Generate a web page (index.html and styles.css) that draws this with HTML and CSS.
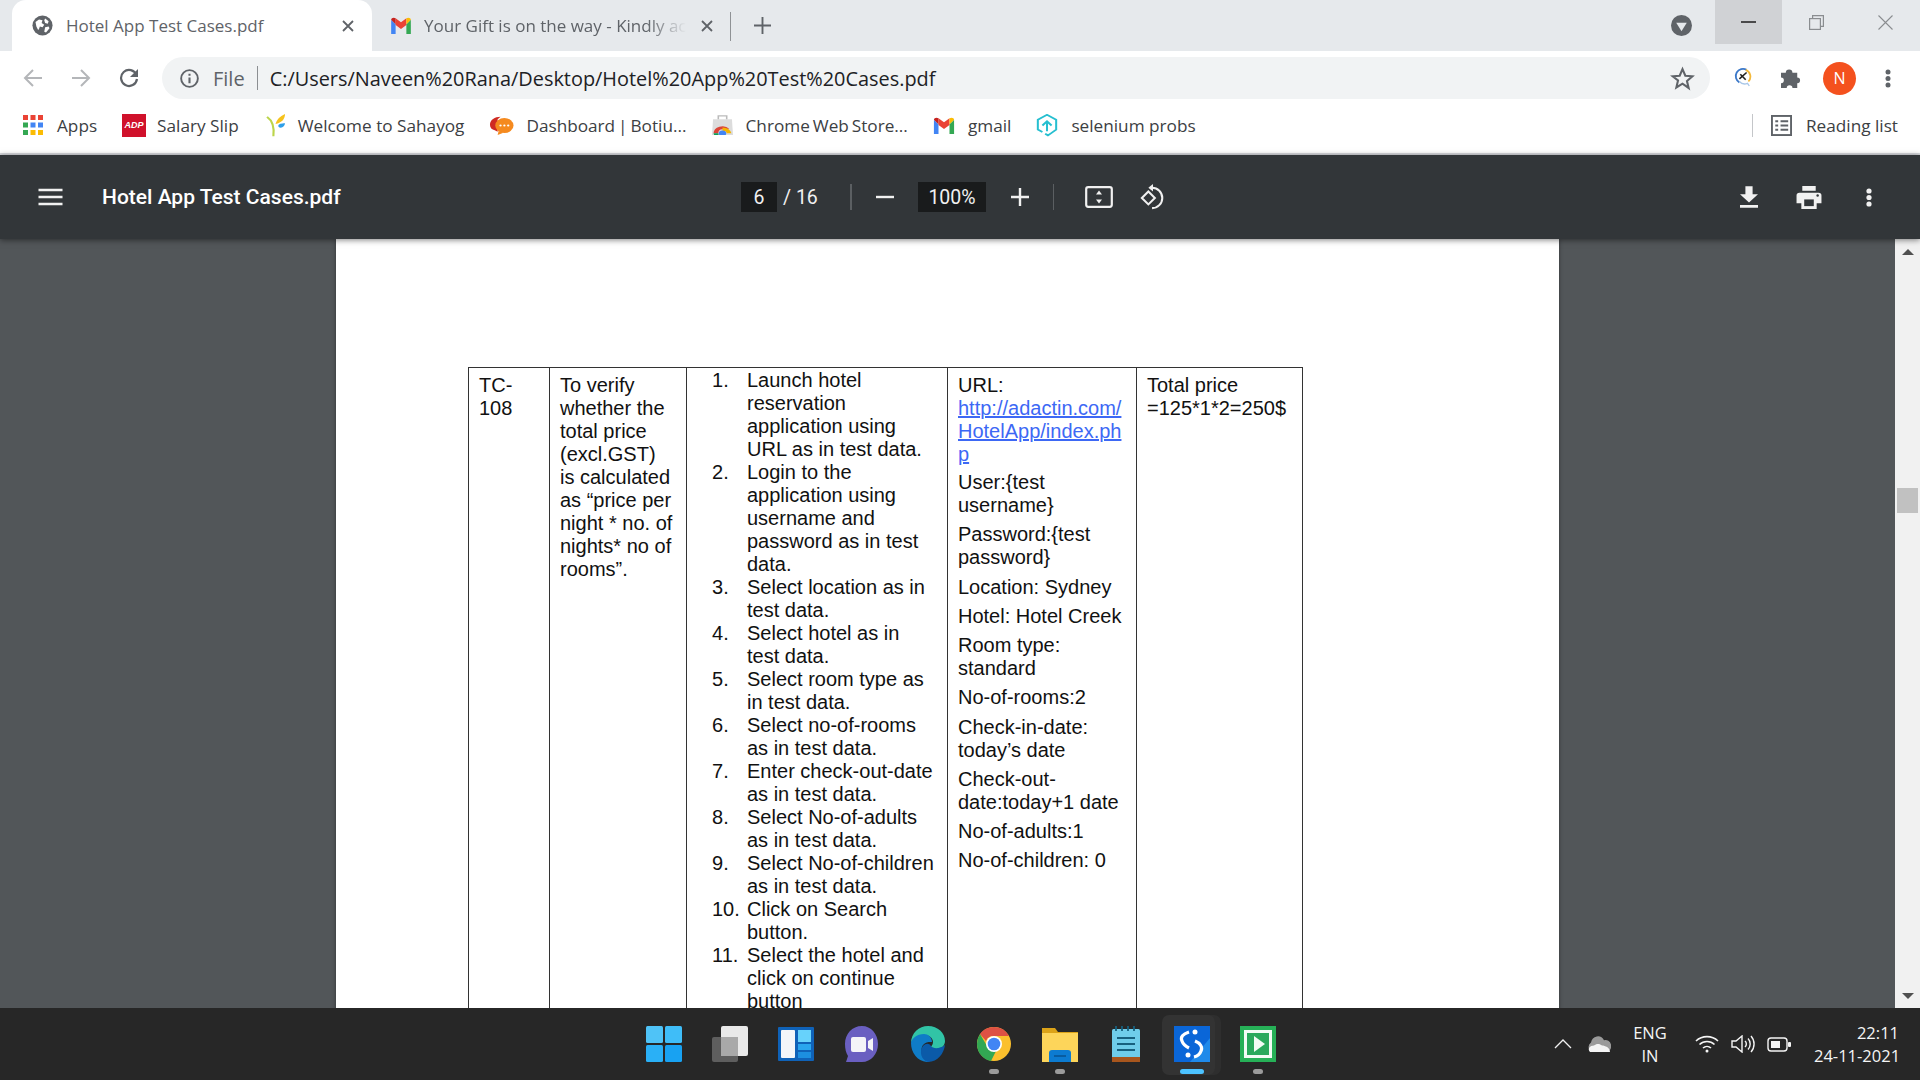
FILE: index.html
```html
<!DOCTYPE html>
<html lang="en">
<head>
    <meta charset="UTF-8">
    <title>Hotel App Test Cases.pdf</title>
    <link rel="stylesheet" href="styles.css">
</head>
<body>
    <div class="tabstrip">
        <div class="tab active">
            <svg class="favicon" viewBox="0 0 24 24"><circle cx="12" cy="12" r="11.5" fill="#5f6368"/><path d="M4 8l4-3 4 1-1 3 3 2-2 3-3-1-1 3-1 1-2-4zM15 4l4 3-1 3-3-1-1-3zM15 14l4-1 1 2-4 5-2-1z" fill="#fff"/></svg>
            <span class="tab-title">Hotel App Test Cases.pdf</span>
            <svg class="tab-x" viewBox="0 0 12 12"><path d="M1 1l10 10M11 1L1 11" stroke="#5f6368" stroke-width="1.8"/></svg>
        </div>
        <div class="tab inactive">
            <svg class="favicon mail" viewBox="0 0 24 19"><path d="M1 3v16h5V8z" fill="#4285f4"/><path d="M23 3v16h-5V8z" fill="#34a853"/><path d="M6 1.500V9l6 4.500L18 9V1.500l-6 4.500z" fill="#ea4335"/><path d="M1 3c0-2 3-3 5-1.500V8z" fill="#c5221f"/><path d="M23 3c0-2-3-3-5-1.500V8z" fill="#fbbc04"/></svg>
            <span class="tab-title fade">Your Gift is on the way - Kindly ack</span>
            <svg class="tab-x" viewBox="0 0 12 12"><path d="M1 1l10 10M11 1L1 11" stroke="#5f6368" stroke-width="1.8"/></svg>
        </div>
        <div class="tab-sep"></div>
        <svg class="new-tab" viewBox="0 0 18 18"><path d="M9 0v18M0 9h18" stroke="#5f6368" stroke-width="2"/></svg>
        <div class="strip-space"></div>
        <svg class="tab-search" viewBox="0 0 22 22"><circle cx="11" cy="11" r="11" fill="#5f6368"/><path d="M5.500 8h11L11 17z" fill="#e6e9ec"/></svg>
        <div class="win-btn hover"><svg width="15" height="2" viewBox="0 0 15 2"><path d="M0 1h15" stroke="#111" stroke-width="1.400"/></svg></div>
        <div class="win-btn"><svg width="15" height="15" viewBox="0 0 15 15" fill="none" stroke="#8a8d90" stroke-width="1.200"><rect x="0.600" y="3.600" width="10.800" height="10.800"/><path d="M3.600 3.600V0.600h10.800v10.800h-3"/></svg></div>
        <div class="win-btn"><svg width="15" height="15" viewBox="0 0 15 15"><path d="M0.500 0.500l14 14M14.500 0.500l-14 14" stroke="#8a8d90" stroke-width="1.100"/></svg></div>
    </div>

    <div class="toolbar">
        <svg class="nav-icon" viewBox="0 0 20 20"><path d="M19 10H2M10 2l-8 8 8 8" fill="none" stroke="#b4b6b9" stroke-width="2"/></svg>
        <svg class="nav-icon" viewBox="0 0 20 20"><path d="M1 10h17M10 2l8 8-8 8" fill="none" stroke="#b4b6b9" stroke-width="2"/></svg>
        <svg class="nav-icon" viewBox="0 0 20 20"><path d="M17.500 7A8 8 0 1 0 18 11" fill="none" stroke="#5f6368" stroke-width="2.200"/><path d="M19 1v8h-8z" fill="#5f6368"/></svg>
        <div class="omnibox">
            <svg class="info" viewBox="0 0 20 20"><circle cx="10" cy="10" r="8.800" fill="none" stroke="#5f6368" stroke-width="2"/><path d="M10 9v6M10 5v2.200" stroke="#5f6368" stroke-width="2.200"/></svg>
            <span class="file-label">File</span>
            <span class="omni-sep"></span>
            <span class="url">C:/Users/Naveen%20Rana/Desktop/Hotel%20App%20Test%20Cases.pdf</span>
            <svg class="star" viewBox="0 0 24 24"><path d="M12 3l2.700 6.300 6.800.6-5.200 4.500 1.600 6.700L12 17l-5.900 3.600 1.600-6.700L2.500 9.900l6.800-.6z" fill="none" stroke="#5f6368" stroke-width="2"/></svg>
        </div>
        <svg class="ext" viewBox="0 0 20 22"><path d="M14 3A8 8 0 0 0 6 17" fill="none" stroke="#3b78c9" stroke-width="2"/><path d="M13 3a8 8 0 0 1 3 13" fill="none" stroke="#f4b93c" stroke-width="2"/><path d="M6 16a8 8 0 0 0 9 2l2 3" fill="none" stroke="#a9c7e8" stroke-width="1.500"/><path d="M6 13l8-7M7 8l6 6" stroke="#222" stroke-width="1.800"/></svg>
        <svg class="puzzle" viewBox="0 0 22 22"><path d="M0 6h5a3.500 3.500 0 0 1 7 0h5v5a3 3 0 0 1 0 6v5h-5a3 3 0 0 0-6 0H0v-5a3 3 0 0 0 0-6z" fill="#5f6368"/></svg>
        <div class="avatar">N</div>
        <svg class="dots" viewBox="0 0 6 19"><circle cx="3" cy="3" r="2.500" fill="#5f6368"/><circle cx="3" cy="9.500" r="2.500" fill="#5f6368"/><circle cx="3" cy="16" r="2.500" fill="#5f6368"/></svg>
    </div>

    <div class="bookmarks">
        <div class="bm">
            <svg class="bm-icon apps" viewBox="0 0 20 20"><g fill="#ea4335"><rect x="0" y="0" width="5" height="5"/><rect x="7.500" y="0" width="5" height="5"/><rect x="15" y="0" width="5" height="5"/></g><rect x="0" y="7.500" width="5" height="5" fill="#34a853"/><rect x="7.500" y="7.500" width="5" height="5" fill="#4285f4"/><rect x="15" y="7.500" width="5" height="5" fill="#4285f4"/><rect x="0" y="15" width="5" height="5" fill="#34a853"/><rect x="7.500" y="15" width="5" height="5" fill="#fbbc04"/><rect x="15" y="15" width="5" height="5" fill="#fbbc04"/></svg>
            <span>Apps</span>
        </div>
        <div class="bm">
            <div class="adp">ADP</div>
            <span>Salary Slip</span>
        </div>
        <div class="bm">
            <svg class="bm-icon sahayog" viewBox="0 0 18 32" preserveAspectRatio="none"><path d="M1 4c5 5 7 14 6 27" fill="none" stroke="#bcd54a" stroke-width="2"/><path d="M9 14C10 8 13 3 18 0c0 7-3 12-9 14z" fill="#f6c21c"/><path d="M12 15c2-2 5-2 6-2 0 3-2 6-4 6s-3-2-2-4z" fill="#2f9fe8"/></svg>
            <span>Welcome to Sahayog</span>
        </div>
        <div class="bm">
            <svg class="bm-icon botium" viewBox="0 0 26 24" preserveAspectRatio="none"><path d="M12 1C6 1 1 5 1 11c0 4 2 6 5 7l3 2V4z" fill="#cf2a22"/><circle cx="16" cy="12" r="9.500" fill="#f58a1f"/><path d="M10 19l-1 5 6-3z" fill="#f58a1f"/><g fill="#fff"><circle cx="12" cy="12" r="1.200"/><circle cx="16" cy="12" r="1.200"/><circle cx="20" cy="12" r="1.200"/></g></svg>
            <span class="tight">Dashboard | Botiu...</span>
        </div>
        <div class="bm">
            <svg class="bm-icon store" viewBox="0 0 20 24" preserveAspectRatio="none"><path d="M1 5h18l1 19H0z" fill="#dcdcdc"/><path d="M6 5V1h8v4" fill="none" stroke="#bbb" stroke-width="1.500"/><path d="M1.500 22a8.500 8.500 0 0 1 15-5.500L10 17c-3 0-4 2-4 5z" fill="#db4437"/><path d="M10 15a8.500 8.500 0 0 1 8.500 7H14c0-2-2-3-4-3z" fill="#f4b400"/><path d="M1.500 22H6c0 1 .3 2 .6 2H2z" fill="#0f9d58"/><circle cx="10" cy="22" r="3.500" fill="#4285f4"/></svg>
            <span class="tight">Chrome Web Store...</span>
        </div>
        <div class="bm">
            <svg class="bm-icon gmail" viewBox="0 0 24 19" preserveAspectRatio="none"><path d="M1 3v16h5V8z" fill="#4285f4"/><path d="M23 3v16h-5V8z" fill="#34a853"/><path d="M6 1.500V9l6 4.500L18 9V1.500l-6 4.500z" fill="#ea4335"/><path d="M1 3c0-2 3-3 5-1.500V8z" fill="#c5221f"/><path d="M23 3c0-2-3-3-5-1.500V8z" fill="#fbbc04"/></svg>
            <span>gmail</span>
        </div>
        <div class="bm">
            <svg class="bm-icon selenium" viewBox="0 0 24 28" preserveAspectRatio="none" fill="none" stroke="#26bfd0" stroke-width="2.200"><path d="M7 22l-5-3V7l10-6 10 6v12l-5 4-4 3-3-2"/><path d="M12 21V10M7 14l5-5 5 5"/></svg>
            <span>selenium probs</span>
        </div>
        <div class="bm-space"></div>
        <div class="bm-sep"></div>
        <div class="bm reading">
            <svg class="bm-icon list" viewBox="0 0 22 22" fill="none" stroke="#5f6368" stroke-width="2"><rect x="1" y="1" width="20" height="20"/><path d="M4.500 6.500h3M10 6.500h8M4.500 11h3M10 11h8M4.500 15.500h3M10 15.500h8"/></svg>
            <span>Reading list</span>
        </div>
    </div>

    <div class="pdf-toolbar">
        <div class="pdf-left">
            <svg class="menu" viewBox="0 0 24 18"><path d="M0 2h24M0 9h24M0 16h24" stroke="#f1f1f1" stroke-width="2.600"/></svg>
            <span class="pdf-title">Hotel App Test Cases.pdf</span>
        </div>
        <div class="pdf-center">
            <div class="num-box page-box">6</div>
            <span class="page-total">/&nbsp;16</span>
            <div class="pdf-sep"></div>
            <svg class="zoom-btn" viewBox="0 0 18 18"><path d="M0 9h18" stroke="#f1f1f1" stroke-width="2.400"/></svg>
            <div class="num-box zoom-box">100%</div>
            <svg class="zoom-btn" viewBox="0 0 18 18"><path d="M0 9h18M9 0v18" stroke="#f1f1f1" stroke-width="2.400"/></svg>
            <div class="pdf-sep second"></div>
            <svg class="fit" viewBox="0 0 28 22"><rect x="1.200" y="1.200" width="25.600" height="19.600" rx="2" fill="none" stroke="#f1f1f1" stroke-width="2.200"/><path d="M14 4.500l3 4h-6zM14 17.500l3-4h-6z" fill="#f1f1f1"/></svg>
            <svg class="rotate" viewBox="0 0 28 28" fill="none" stroke="#f1f1f1" stroke-width="2.200"><path d="M2 15l7-7 7 7-7 7z"/><path d="M13 4a11 11 0 1 1 0 22"/><path d="M14 0v8l-5-4z" fill="#f1f1f1" stroke="none"/></svg>
        </div>
        <div class="pdf-right">
            <svg class="dl" viewBox="0 0 20 24"><path d="M6 0h8v9h6L10 18 0 9h6zM0 21h20v3H0z" fill="#f1f1f1"/></svg>
            <svg class="print" viewBox="0 0 26 24"><path d="M6 0h14v5H6z" fill="#f1f1f1"/><path d="M3 7h20a3 3 0 0 1 3 3v8h-5v6H5v-6H0v-8a3 3 0 0 1 3-3z" fill="#f1f1f1"/><path d="M8 14h10v7H8z" fill="#323639"/><circle cx="22" cy="10" r="1.300" fill="#323639"/></svg>
            <svg class="pdf-dots" viewBox="0 0 6 19"><circle cx="3" cy="3" r="2.600" fill="#f1f1f1"/><circle cx="3" cy="9.500" r="2.600" fill="#f1f1f1"/><circle cx="3" cy="16" r="2.600" fill="#f1f1f1"/></svg>
        </div>
    </div>

    <div class="viewer">
        <div class="pages">
            <div class="page">
                <table class="cases">
                    <colgroup>
                        <col class="c1"><col class="c2"><col class="c3"><col class="c4"><col class="c5">
                    </colgroup>
                    <tr>
                        <td class="pad">TC-<br>108</td>
                        <td class="pad verify">To verify whether the total price (excl.GST) is calculated as “price per night * no. of nights* no of rooms”.</td>
                        <td class="steps-cell">
                            <ol class="steps">
                                <li>Launch hotel reservation application using URL as in test data.</li>
                                <li>Login to the application using username and password as in test data.</li>
                                <li>Select location as in test data.</li>
                                <li>Select hotel as in test data.</li>
                                <li>Select room type as in test data.</li>
                                <li>Select no-of-rooms as in test data.</li>
                                <li>Enter check-out-date as in test data.</li>
                                <li>Select No-of-adults as in test data.</li>
                                <li>Select No-of-children as in test data.</li>
                                <li>Click on Search button.</li>
                                <li>Select the hotel and click on continue button</li>
                            </ol>
                        </td>
                        <td class="pad data-cell">
                            <p class="url-line">URL:<br><a class="link">http://adactin.com/ HotelApp/index.ph p</a></p>
                            <p>User:{test username}</p>
                            <p>Password:{test password}</p>
                            <p>Location: Sydney</p>
                            <p>Hotel: Hotel Creek</p>
                            <p>Room type: standard</p>
                            <p>No-of-rooms:2</p>
                            <p>Check-in-date: today’s date</p>
                            <p>Check-out-date:today+1 date</p>
                            <p>No-of-adults:1</p>
                            <p>No-of-children: 0</p>
                        </td>
                        <td class="pad">Total price =125*1*2=250$</td>
                    </tr>
                </table>
            </div>
        </div>
        <div class="scrollbar">
            <div class="arrow-up"></div>
            <div class="track"><div class="thumb"></div></div>
            <div class="arrow-down"></div>
        </div>
    </div>

    <div class="taskbar">
        <div class="task-apps">
            <div class="task"><svg viewBox="0 0 36 36"><rect x="0" y="0" width="17" height="17" rx="1.500" fill="#4fc3f7"/><rect x="19" y="0" width="17" height="17" rx="1.500" fill="#3fbdf8"/><rect x="0" y="19" width="17" height="17" rx="1.500" fill="#2ab0f6"/><rect x="19" y="19" width="17" height="17" rx="1.500" fill="#18a2f2"/></svg></div>
            <div class="task"><svg viewBox="0 0 36 36"><rect x="0" y="11" width="26" height="25" rx="2" fill="#5e5e5e"/><rect x="9" y="0" width="27" height="30" rx="2" fill="#e9e9e9"/><rect x="9" y="11" width="17" height="19" fill="#a9a9a9"/></svg></div>
            <div class="task"><svg viewBox="0 0 36 36"><rect x="0" y="1" width="36" height="34" rx="1" fill="#0f62b8"/><rect x="3" y="4" width="14" height="28" rx="1" fill="#f3f6f9"/><rect x="20" y="4" width="13" height="12" fill="#67d2fb"/><rect x="20" y="18" width="13" height="6" fill="#2aa6ee"/><rect x="20" y="26" width="13" height="6" fill="#1c8fe0"/></svg></div>
            <div class="task"><svg viewBox="0 0 36 36"><path d="M18 0c9 0 16 8 16 18s-7 18-16 18H2l2-6C2 27 1 23 1 18 1 8 8 0 18 0z" fill="#6a5fc1"/><rect x="7" y="11" width="15" height="15" rx="2" fill="#f4f4f8"/><path d="M24 15l5-3v13l-5-3z" fill="#f4f4f8"/></svg></div>
            <div class="task"><svg viewBox="0 0 36 36"><path d="M1 17C1 7 9 0 18 0c10 0 17 7 17 15 0 5-4 8-9 8-3 0-5-1-5-2 0-1 2-2 2-5 0-4-4-7-8-7-7 0-14 6-14 8z" fill="#31c4a6"/><path d="M1 17c0-4 6-9 13-9 4 0 8 3 8 8 0 0-6-1-9 3-3 4-1 11 4 15 1 1 3 2 3 2C9 37 1 28 1 17z" fill="#0f7cc7"/><path d="M13 20c3-3 6-3 8 0 2 3 9 3 14-1-1 8-7 17-17 17-7-2-9-11-5-16z" fill="#0b5aa8"/></svg></div>
            <div class="task dot"><svg viewBox="0 0 36 36"><circle cx="18" cy="18" r="17" fill="#fbc02d"/><path d="M18 1a17 17 0 0 1 15 9H18a8 8 0 0 0-8 5L4 8A17 17 0 0 1 18 1z" fill="#dd5144"/><path d="M1 18A17 17 0 0 1 4 8l7 12a8 8 0 0 0 9 5l-5 10A17 17 0 0 1 1 18z" fill="#32a853"/><circle cx="18" cy="18" r="8" fill="#fff"/><circle cx="18" cy="18" r="6.300" fill="#4285f4"/></svg></div>
            <div class="task dot"><svg viewBox="0 0 36 36"><path d="M0 2h13l3 4h20v30H0z" fill="#dca318"/><rect x="0" y="7" width="36" height="29" fill="#fdd55a"/><path d="M7 36V27a3 3 0 0 1 3-3h16a3 3 0 0 1 3 3v9z" fill="#0c7bd1"/><path d="M12 30h12" stroke="#07528f" stroke-width="1.500"/></svg></div>
            <div class="task"><svg viewBox="0 0 36 36"><rect x="4" y="3" width="28" height="33" rx="1.500" fill="#6fcdea"/><rect x="4" y="31" width="28" height="5" fill="#a8561d"/><path d="M9 12h18M9 18h18M9 24h18" stroke="#17617f" stroke-width="2"/><path d="M8 0v5M14 0v5M20 0v5M26 0v5" stroke="#17617f" stroke-width="1.800"/></svg></div>
            <div class="task current"><svg viewBox="0 0 36 36"><rect width="36" height="36" fill="#0a66d8"/><path d="M16 36L36 12v24z" fill="#1f8aea"/><path d="M15 6C9 8 6 11 8 15c1 3 3 5 7 7M21 15c5 2 8 6 6 10-1 3-3 5-7 6" fill="none" stroke="#fff" stroke-width="3.200"/><circle cx="21" cy="6" r="2.500" fill="#fff"/><circle cx="14" cy="29" r="2.500" fill="#fff"/></svg></div>
            <div class="task dot"><svg viewBox="0 0 36 36"><rect width="36" height="36" fill="#26b057"/><rect x="4" y="4" width="28" height="28" fill="#f2fbf5"/><rect x="7" y="7" width="22" height="22" fill="#29a95c"/><path d="M14 10l11 8-11 8z" fill="#f2fbf5"/></svg></div>
        </div>
        <div class="tray">
            <svg class="chev" viewBox="0 0 18 10"><path d="M1 9l8-8 8 8" fill="none" stroke="#f0f0f0" stroke-width="1.300"/></svg>
            <svg class="cloud" viewBox="0 0 24 15" preserveAspectRatio="none"><path d="M5 15a5 5 0 0 1-1-9 7 7 0 0 1 13-2 5 5 0 0 1 3 11z" fill="#9a9a9a"/><path d="M3 15c-3-3 0-6 4-6 2-2 6-2 8 0 3 0 8 2 8 6z" fill="#f4f4f4"/></svg>
            <div class="lang">ENG<br>IN</div>
            <svg class="wifi" viewBox="0 0 24 18" fill="none" stroke="#f5f5f5" stroke-width="1.600"><path d="M1 6a16 16 0 0 1 22 0M4.500 9.500a11 11 0 0 1 15 0M8 13a6 6 0 0 1 8 0"/><circle cx="12" cy="16" r="1.500" fill="#f5f5f5" stroke="none"/></svg>
            <svg class="vol" viewBox="0 0 24 18" fill="none" stroke="#f5f5f5" stroke-width="1.400"><path d="M1 6h4l6-5v16l-6-5H1z"/><path d="M14 6a4 4 0 0 1 0 6M17 3.500a8 8 0 0 1 0 11M20 1a12 12 0 0 1 0 16"/></svg>
            <svg class="batt" viewBox="0 0 24 15"><rect x="1" y="1" width="19" height="13" rx="3" fill="none" stroke="#f5f5f5" stroke-width="1.400"/><rect x="4" y="4" width="9" height="7" fill="#f5f5f5"/><rect x="21" y="5" width="3" height="5" rx="1" fill="#f5f5f5"/></svg>
            <div class="clock">22:11<br>24-11-2021</div>
        </div>
    </div>
</body>
</html>
```

FILE: styles.css
```css
* { margin: 0; padding: 0; box-sizing: border-box; }
html, body { height: 100%; }
body {
    width: 1920px;
    height: 1080px;
    overflow: hidden;
    display: flex;
    flex-direction: column;
    font-family: "Open Sans", "Noto Sans", sans-serif;
    background: #fff;
}
svg { display: block; flex: none; }

/* tab strip */
.tabstrip {
    height: 51px;
    flex: none;
    display: flex;
    align-items: flex-start;
    background: #e6e9ec;
    padding-left: 12px;
}
.tab { display: flex; align-items: center; height: 51px; }
.tab.active {
    width: 360px;
    background: #fff;
    border-radius: 14px 14px 0 0;
    padding: 0 18px 0 20px;
}
.tab.inactive { width: 357px; padding: 0 16px 0 18px; }
.favicon { width: 21px; height: 21px; margin-right: 13px; }
.favicon.mail { width: 22px; height: 17px; margin-right: 12px; }
.tab-title {
    flex: 1;
    font-size: 17px;
    color: #5f6368;
    white-space: nowrap;
    overflow: hidden;
}
.fade { -webkit-mask-image: linear-gradient(90deg, #000 84%, transparent 99%); }
.tab-x { width: 12px; height: 12px; margin-left: 12px; }
.tab-sep { width: 1px; height: 29px; margin: 12px 0 0 1px; background: #8f9295; }
.new-tab { width: 17px; height: 17px; margin: 17px 0 0 23px; }
.strip-space { flex: 1; }
.tab-search { width: 21px; height: 21px; margin: 15px 23px 0 0; }
.win-btn {
    width: 68px;
    height: 44px;
    display: flex;
    align-items: center;
    justify-content: center;
}
.win-btn.hover { background: #d0d2d5; width: 67px; }
.win-btn:last-child { width: 70px; }

/* address bar */
.toolbar {
    height: 54px;
    flex: none;
    display: flex;
    align-items: center;
    background: #fff;
    padding-left: 23px;
}
.nav-icon { width: 20px; height: 20px; margin-right: 28px; }
.omnibox {
    width: 1548px;
    height: 42px;
    margin-left: -5px;
    padding: 0 15px 0 18px;
    display: flex;
    align-items: center;
    background: #f1f3f4;
    border-radius: 21px;
    font-size: 20px;
}
.info { width: 19px; height: 19px; margin-right: 14px; }
.file-label { color: #5f6368; }
.omni-sep { width: 1px; height: 24px; margin: 0 12px; background: #8c8f92; }
.url { flex: 1; color: #202124; white-space: nowrap; font-size: 19.9px; }
.star { width: 25px; height: 25px; }
.ext { width: 18px; height: 20px; margin: -2px 0 0 24px; }
.puzzle { width: 21px; height: 21px; margin: -2px 0 0 29px; }
.avatar {
    width: 33px;
    height: 33px;
    margin-left: 21px;
    border-radius: 50%;
    background: #f4511e;
    color: #fff;
    font-size: 16px;
    display: flex;
    align-items: center;
    justify-content: center;
}
.dots { width: 6px; height: 19px; margin-left: 29px; }

/* bookmarks bar */
.bookmarks {
    height: 50px;
    flex: none;
    display: flex;
    align-items: center;
    padding: 0 22px 8px 23px;
    background: #fff;
    border-bottom: 2px solid #dadce0;
    font-size: 17.2px;
    color: #3c4043;
}
.bm { display: flex; align-items: center; margin-right: 25px; white-space: nowrap; }
.bm-icon { margin-right: 12px; }
.tight { word-spacing: -1.5px; }
.apps { width: 20px; height: 20px; margin-right: 14px; }
.adp {
    width: 24px;
    height: 23px;
    margin-right: 11px;
    background: #d0112b;
    color: #fff;
    font: italic bold 9px "Liberation Sans", sans-serif;
    display: flex;
    align-items: center;
    justify-content: center;
}
.sahayog { width: 19px; height: 23px; margin: 0 13px 0 2px; }
.botium { width: 25px; height: 19px; }
.store { width: 21px; height: 20px; margin-right: 13px; }
.gmail { width: 22px; height: 17px; margin-right: 13px; }
.selenium { width: 22px; height: 23px; margin-right: 13px; }
.bm-space { flex: 1; }
.bm-sep { width: 1px; height: 23px; margin-right: 18px; background: #c4c6c9; }
.reading { margin-right: 0; }
.list { width: 21px; height: 21px; margin-right: 14px; }

/* pdf viewer toolbar */
.pdf-toolbar {
    height: 84px;
    flex: none;
    display: flex;
    align-items: center;
    background: #323639;
    color: #f1f1f1;
    position: relative;
    z-index: 1;
    box-shadow: 0 1px 6px rgba(0,0,0,0.5);
}
.pdf-left { width: 741px; display: flex; align-items: center; padding-left: 38px; }
.menu { width: 25px; height: 18px; margin-right: 39px; }
.pdf-title { font: 500 21px Roboto, sans-serif; color: #fff; }
.pdf-center { display: flex; align-items: center; font: 19.5px Roboto, sans-serif; }
.num-box {
    height: 30px;
    background: #191b1c;
    display: flex;
    align-items: center;
    justify-content: center;
}
.page-box { width: 36px; }
.page-total { margin-left: 6px; width: 35px; white-space: nowrap; }
.pdf-sep { width: 2px; height: 26px; margin-left: 32px; background: #5b5f62; }
.pdf-sep.second { width: 1px; margin-left: 24px; }
.zoom-btn { width: 18px; height: 18px; margin-left: 24px; }
.zoom-box { width: 68px; margin-left: 24px; }
.zoom-box + .zoom-btn { margin-left: 25px; }
.fit { width: 28px; height: 22px; margin-left: 31px; }
.rotate { width: 26px; height: 26px; margin-left: 27px; }
.pdf-right { flex: 1; display: flex; align-items: center; justify-content: flex-end; padding-right: 48px; }
.dl { width: 18px; height: 22px; }
.print { width: 26px; height: 23px; margin-left: 38px; }
.pdf-dots { width: 6px; height: 19px; margin-left: 44px; }

/* document */
.viewer {
    flex: 1;
    min-height: 0;
    display: flex;
    background: #525659;
    overflow: hidden;
}
.pages { flex: 1; overflow: hidden; padding-left: 336px; }
.page {
    width: 1223px;
    height: 1200px;
    background: #fff;
    padding: 128px 0 0 132px;
    box-shadow: 0 0 4px rgba(0,0,0,0.4);
    font: 20px/23px "Liberation Sans", Arial, sans-serif;
    color: #111;
}
.cases { width: 835px; table-layout: fixed; border-collapse: collapse; border: 1.500px solid #222; }
.cases td { border: 1.500px solid #333; vertical-align: top; height: 760px; }
.c1 { width: 81px; }
.c2 { width: 137px; }
.c3 { width: 261px; }
.c4 { width: 189px; }
.c5 { width: 166px; }
.pad { padding: 6px 8px 0 10px; }
.cases .verify { padding-right: 13px; }
.steps-cell { padding: 1px 13px 0 0; }
.steps { list-style: none; counter-reset: step; padding-left: 60px; }
.steps li { counter-increment: step; position: relative; }
.steps li::before {
    content: counter(step) ".";
    position: absolute;
    left: -35px;
    top: 0;
}
.data-cell p { margin-bottom: 6.25px; }
.data-cell .url-line { margin-bottom: 5px; word-break: break-word; }
.link { color: #3d68f5; text-decoration: underline; }

/* page scrollbar */
.scrollbar { width: 25px; display: flex; flex-direction: column; background: #f1f1f1; }
.arrow-up, .arrow-down { flex: none; display: flex; justify-content: center; align-items: center; }
.arrow-up { height: 26px; }
.arrow-down { height: 24px; }
.arrow-up::before { content: ""; border: 6px solid transparent; border-top: 0; border-bottom: 6px solid #505050; }
.arrow-down::before { content: ""; border: 6px solid transparent; border-bottom: 0; border-top: 6px solid #505050; }
.track { flex: 1; padding: 223px 2px 0; }
.thumb { height: 25px; background: #c1c1c1; }

/* windows taskbar */
.taskbar {
    height: 72px;
    flex: none;
    display: flex;
    align-items: center;
    background: #272727;
    color: #f5f5f5;
    position: relative;
}
.task-apps { display: flex; margin-left: 631px; }
.task { width: 66px; height: 66px; display: flex; align-items: center; justify-content: center; position: relative; }
.task svg { width: 36px; height: 36px; position: relative; }
.task.dot::after {
    content: "";
    position: absolute;
    bottom: 3px;
    width: 10px;
    height: 5px;
    border-radius: 3px;
    background: #9b9b9b;
}
.task.current::before {
    content: "";
    position: absolute;
    top: 4px;
    bottom: 2px;
    left: 3px;
    width: 53px;
    border-radius: 7px;
    background: #333;
    box-shadow: 6px 0 0 #2e2e2e;
}
.task.current::after {
    content: "";
    position: absolute;
    bottom: 3px;
    left: 21px;
    width: 24px;
    height: 5px;
    border-radius: 3px;
    background: #4cc2ff;
}
.tray { flex: 1; display: flex; align-items: center; justify-content: flex-end; padding-right: 21px; font-size: 16.5px; }
.chev { width: 18px; height: 10px; margin-right: 15px; }
.cloud { width: 24px; height: 16px; margin-right: 17px; }
.lang { width: 44px; text-align: center; line-height: 23px; margin-right: 23px; }
.wifi { width: 24px; height: 18px; margin-right: 12px; }
.vol { width: 24px; height: 18px; margin-right: 12px; }
.batt { width: 24px; height: 15px; margin-right: 23px; }
.clock { text-align: right; line-height: 23px; width: 85px; white-space: nowrap; }
```
